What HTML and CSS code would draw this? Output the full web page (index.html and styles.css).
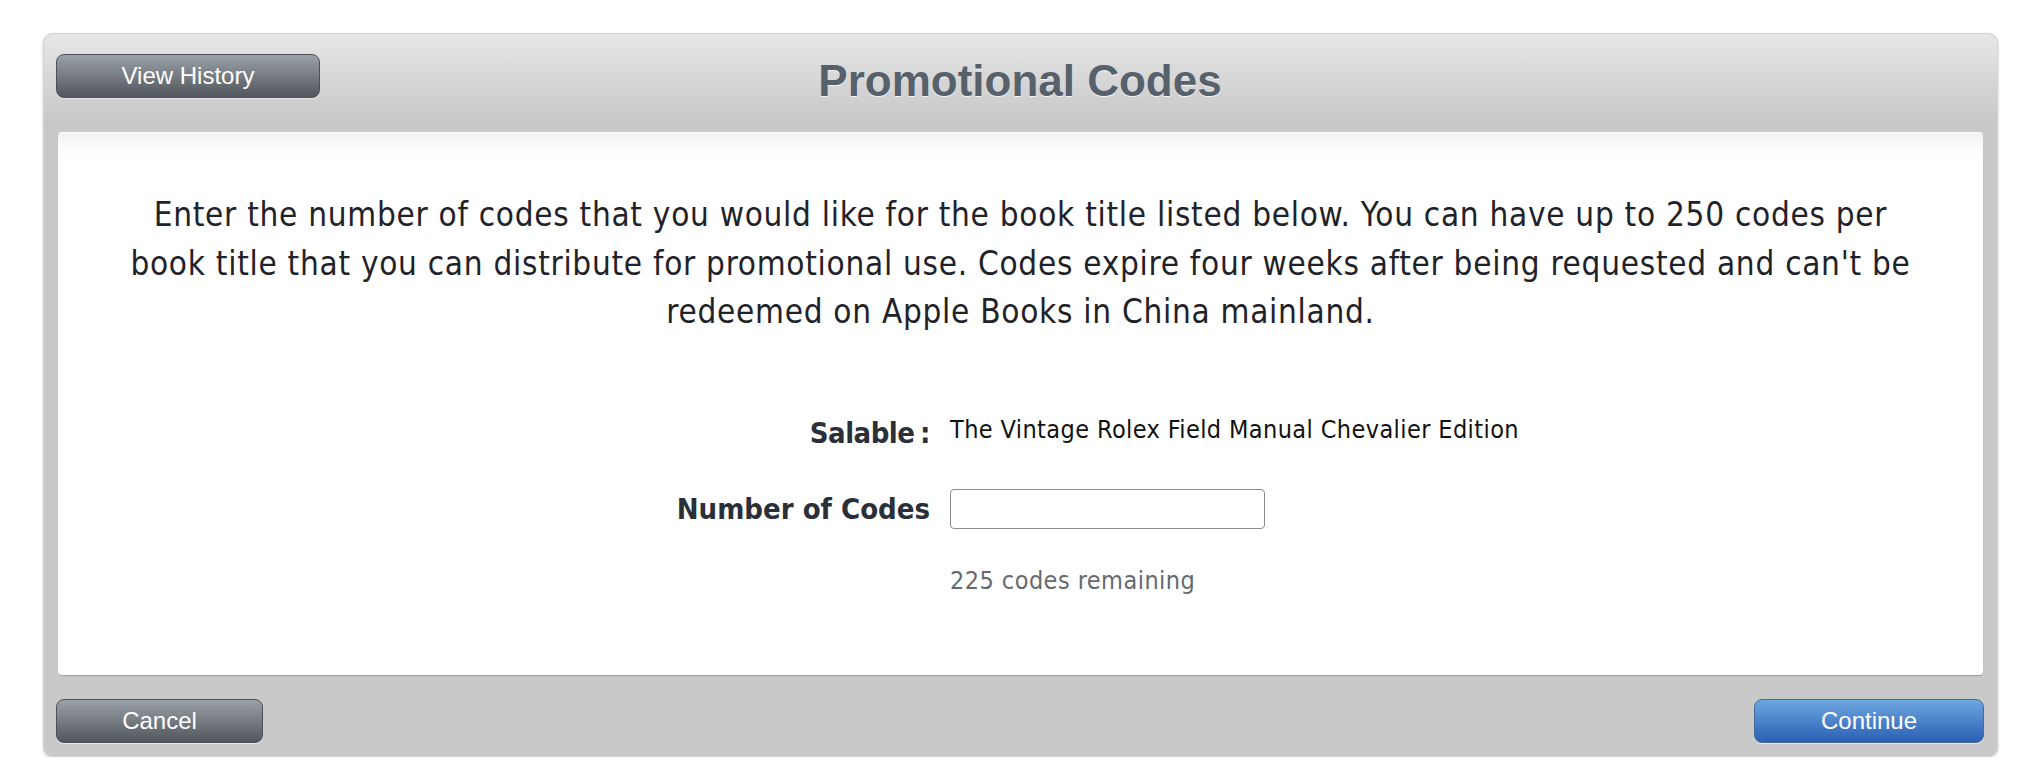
FILE: index.html
```html
<!DOCTYPE html>
<html lang="en">
<head>
<meta charset="utf-8">
<title>Promotional Codes</title>
<link rel="stylesheet" href="styles.css">
</head>
<body>
<div class="dialog">
  <header class="dialog-header">
    <div class="header-left"><button class="btn btn-gray btn-history">View History</button></div>
    <h1 class="dialog-title">Promotional Codes</h1>
    <div class="header-right"></div>
  </header>
  <main class="dialog-body">
    <p class="intro">Enter the number of codes that you would like for the book title listed below. You can have up to 250 codes per book title that you can distribute for promotional use. Codes expire four weeks after being requested and can't be redeemed on Apple Books in China mainland.</p>
    <div class="form">
      <div class="label label-salable">Salable :</div>
      <div class="value value-title">The Vintage Rolex Field Manual Chevalier Edition</div>
      <label class="label label-number" for="codes">Number of Codes</label>
      <div class="value value-input"><input id="codes" class="input" type="text"></div>
      <div></div>
      <div class="remaining">225 codes remaining</div>
    </div>
  </main>
  <footer class="dialog-footer">
    <button class="btn btn-gray btn-cancel">Cancel</button>
    <button class="btn btn-blue btn-continue">Continue</button>
  </footer>
</div>
</body>
</html>
```

FILE: styles.css
```css
html, body {
  margin: 0;
  padding: 0;
  background: #ffffff;
}
body {
  padding: 33px 34px 0 43px;
  font-family: "DejaVu Sans Condensed", "DejaVu Sans", sans-serif;
  font-stretch: semi-condensed;
}
.dialog {
  background: #c9c9c9;
  border: 1px solid #d2d2d2;
  border-radius: 10px;
  box-shadow: 0 1px 3px rgba(0,0,0,0.22);
  display: flex;
  flex-direction: column;
  height: 724px;
  box-sizing: border-box;
}
.dialog-header {
  height: 98px;
  display: grid;
  grid-template-columns: 1fr auto 1fr;
  align-items: start;
  padding: 0 13px 0 12px;
  background: linear-gradient(#e7e7e7 0%, #c8c8c8 88%, #c9c9c9 100%);
  border-radius: 9px 9px 0 0;
}
.header-left { padding-top: 20px; }
.dialog-title {
  margin: 0;
  padding-top: 22px;
  font-family: "Liberation Sans", Arial, sans-serif;
  font-weight: bold;
  font-size: 44px;
  line-height: 50px;
  color: #57616b;
  text-shadow: 0 1px 0 #f4f4f4;
}
.btn {
  font-family: "Liberation Sans", Arial, sans-serif;
  font-size: 24px;
  color: #fff;
  height: 44px;
  border-radius: 8px;
  cursor: pointer;
  box-shadow: 0 1px 0 rgba(255,255,255,0.55);
  padding: 0 0 1px;
}
.btn-gray {
  background: linear-gradient(#9ba1a8, #51565c);
  border: 1px solid #4c5157;
}
.btn-blue {
  background: linear-gradient(#6ea8e1, #2a5fb3);
  border: 1px solid #466a98;
}
.btn-history { width: 264px; }
.btn-cancel { width: 207px; }
.btn-continue { width: 230px; }
.dialog-body {
  margin: 0 14px;
  flex: 1;
  background: linear-gradient(#f2f2f2 0px, #fbfbfb 14px, #ffffff 26px);
  border-top: 1px solid #fdfdfd;
  border-radius: 4px;
  box-shadow: 0 1px 1px rgba(0,0,0,0.22);
  padding: 58px 66px 0;
  color: #1f2329;
}
.intro {
  margin: 0;
  text-align: center;
  font-size: 33px;
  line-height: 48.5px;
  letter-spacing: 0.72px;
}
.form {
  margin: 74px 0 0 -66px;
  display: grid;
  grid-template-columns: 872px 1fr;
  column-gap: 20px;
  row-gap: 0;
  align-items: center;
}
.label {
  text-align: right;
  font-weight: bold;
  font-size: 29px;
  color: #2b3038;
}
.label-salable {
  height: 40px;
  line-height: 44px;
  letter-spacing: -0.5px;
  word-spacing: -3px;
}
.label-number { padding-top: 38px; line-height: 40px; }
.value {
  font-size: 25px;
  letter-spacing: 0.4px;
  color: #111;
}
.value-title { height: 40px; line-height: 38px; }
.value-input { padding-top: 38px; }
.input {
  display: block;
  width: 315px;
  height: 40px;
  box-sizing: border-box;
  border: 1px solid #8b8b8b;
  border-radius: 4px;
  background: #fff;
  font-size: 22px;
}
.remaining {
  padding-top: 37px;
  font-size: 25px;
  color: #666a6f;
  letter-spacing: 0.45px;
}
.dialog-footer {
  height: 81px;
  display: flex;
  justify-content: space-between;
  align-items: flex-start;
  padding: 24px 13px 0 12px;
  box-sizing: border-box;
}
```
